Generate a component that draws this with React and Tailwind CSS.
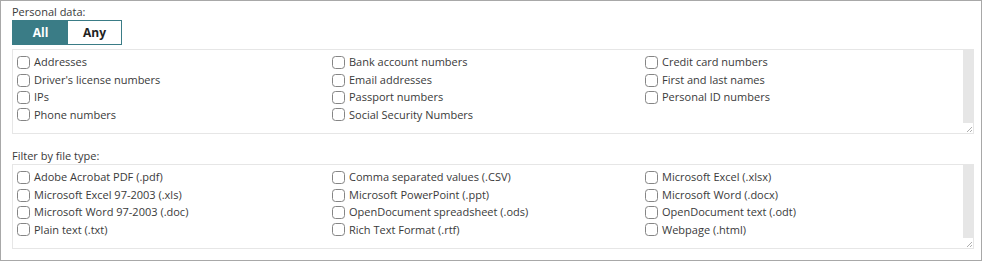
import React from "react";

const personal = [
  "Addresses", "Bank account numbers", "Credit card numbers",
  "Driver's license numbers", "Email addresses", "First and last names",
  "IPs", "Passport numbers", "Personal ID numbers",
  "Phone numbers", "Social Security Numbers",
];

const files = [
  "Adobe Acrobat PDF (.pdf)", "Comma separated values (.CSV)", "Microsoft Excel (.xlsx)",
  "Microsoft Excel 97-2003 (.xls)", "Microsoft PowerPoint (.ppt)", "Microsoft Word (.docx)",
  "Microsoft Word 97-2003 (.doc)", "OpenDocument spreadsheet (.ods)", "OpenDocument text (.odt)",
  "Plain text (.txt)", "Rich Text Format (.rtf)", "Webpage (.html)",
];

function Check({ label }) {
  return (
    <label className="flex items-center h-[17.4px] gap-[4px] text-[11px] text-[#3a3a3a] whitespace-nowrap">
      <span className="w-[13px] h-[13px] shrink-0 rounded-[3.5px] border border-[#858585] bg-white" />
      <span>{label}</span>
    </label>
  );
}

function Box({ items }) {
  return (
    <div className="flex h-[85px] border border-[#e6e6e6] bg-white">
      <div className="flex-1 grid grid-cols-[315px_313px_1fr] content-start pl-[4px] pt-[4px]">
        {items.map((l) => (
          <Check key={l} label={l} />
        ))}
      </div>
      <div className="w-[10px] flex flex-col">
        <div className="flex-1 bg-[#e6e6e6]" />
        <div className="h-[10px] bg-white flex items-end justify-end">
          <svg width="10" height="10" viewBox="0 0 10 10">
            <line x1="9" y1="4" x2="4" y2="9" stroke="#999" strokeWidth="0.8" />
            <line x1="9" y1="7" x2="7" y2="9" stroke="#999" strokeWidth="0.8" />
          </svg>
        </div>
      </div>
    </div>
  );
}

export default function App() {
  return (
    <div
      className="w-[982px] h-[261px] bg-white border border-[#a8a8a8] box-border pl-[11px] pr-[7px] pt-[2px]"
      style={{ fontFamily: '"Open Sans", "Noto Sans", sans-serif' }}
    >
      <div className="text-[11px] text-[#3a3a3a] leading-[17px]">Personal data:</div>
      <div className="flex w-[110px] h-[25px] border border-[#3a7c86]">
        <div className="w-[55px] bg-[#3a7c86] text-white font-bold text-[12px] flex items-center justify-center">All</div>
        <div className="flex-1 bg-white text-[#222] font-bold text-[12px] flex items-center justify-center">Any</div>
      </div>
      <div className="mt-[4px]">
        <Box items={personal} />
      </div>
      <div className="text-[11px] text-[#3a3a3a] leading-[17px] mt-[13px]">Filter by file type:</div>
      <div>
        <Box items={files} />
      </div>
    </div>
  );
}
